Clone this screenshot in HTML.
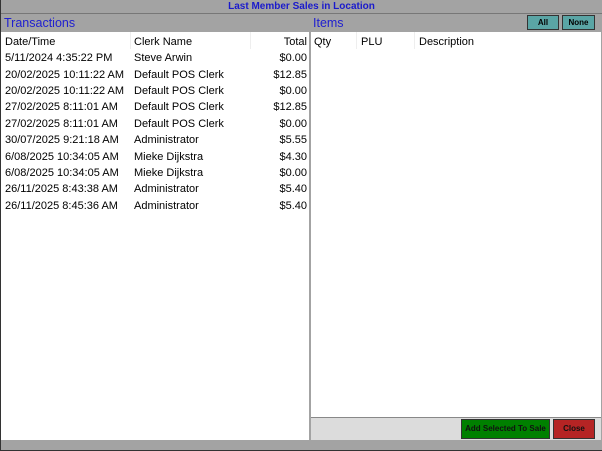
<!DOCTYPE html>
<html><head><style>
*{margin:0;padding:0;box-sizing:border-box}
html,body{overflow:hidden}
body{width:602px;height:451px;background:#a3a3a3;font-family:"Liberation Sans",sans-serif;position:relative;border-left:1px solid #333;border-bottom:1px solid #333}
.a{position:absolute}
.title{left:0;top:0;width:601px;height:14px;text-align:center;color:#1a1acc;font-weight:bold;font-size:10px;line-height:13px;border-bottom:1px solid #777}
.hdr{color:#2020d0;font-size:12.5px}
.lp{left:0;top:32px;width:308px;height:408px;background:#fff}
.rp{left:310px;top:32px;width:290px;height:385px;background:#fff}
.bar{left:310px;top:417px;width:290px;height:23px;background:#dcdcdc;border-top:1px solid #888}
.row{position:absolute;left:0;height:16px;font-size:11px;line-height:16px;color:#000;width:308px;white-space:nowrap}
.row span{position:absolute}
.btn{position:absolute;font-size:8px;font-weight:bold;text-align:center;border:1px solid #333;white-space:nowrap}
</style></head><body>
<div class="a title">Last Member Sales in Location</div>
<div class="a hdr" style="left:3px;top:16px">Transactions</div>
<div class="a hdr" style="left:312px;top:16px">Items</div>
<div class="btn" style="left:526px;top:15px;width:32px;height:15px;line-height:13px;background:#5aa5a5">All</div>
<div class="btn" style="left:561px;top:15px;width:33px;height:15px;line-height:13px;background:#5aa5a5">None</div>
<div class="a lp">
<div class="a" style="left:129px;top:0;width:1px;height:17px;background:#eee"></div>
<div class="a" style="left:249px;top:0;width:1px;height:17px;background:#eee"></div>
<div class="row" style="top:2px"><span style="left:4px">Date/Time</span><span style="left:133px">Clerk Name</span><span style="right:2px">Total</span></div>
<div class="row" style="top:18px"><span style="left:4px">5/11/2024 4:35:22 PM</span><span style="left:133px">Steve Arwin</span><span style="right:2px">$0.00</span></div>
<div class="row" style="top:35px"><span style="left:4px">20/02/2025 10:11:22 AM</span><span style="left:133px">Default POS Clerk</span><span style="right:2px">$12.85</span></div>
<div class="row" style="top:51px"><span style="left:4px">20/02/2025 10:11:22 AM</span><span style="left:133px">Default POS Clerk</span><span style="right:2px">$0.00</span></div>
<div class="row" style="top:67px"><span style="left:4px">27/02/2025 8:11:01 AM</span><span style="left:133px">Default POS Clerk</span><span style="right:2px">$12.85</span></div>
<div class="row" style="top:84px"><span style="left:4px">27/02/2025 8:11:01 AM</span><span style="left:133px">Default POS Clerk</span><span style="right:2px">$0.00</span></div>
<div class="row" style="top:100px"><span style="left:4px">30/07/2025 9:21:18 AM</span><span style="left:133px">Administrator</span><span style="right:2px">$5.55</span></div>
<div class="row" style="top:117px"><span style="left:4px">6/08/2025 10:34:05 AM</span><span style="left:133px">Mieke Dijkstra</span><span style="right:2px">$4.30</span></div>
<div class="row" style="top:133px"><span style="left:4px">6/08/2025 10:34:05 AM</span><span style="left:133px">Mieke Dijkstra</span><span style="right:2px">$0.00</span></div>
<div class="row" style="top:149px"><span style="left:4px">26/11/2025 8:43:38 AM</span><span style="left:133px">Administrator</span><span style="right:2px">$5.40</span></div>
<div class="row" style="top:166px"><span style="left:4px">26/11/2025 8:45:36 AM</span><span style="left:133px">Administrator</span><span style="right:2px">$5.40</span></div>
</div>
<div class="a rp">
<div class="a" style="left:45px;top:0;width:1px;height:17px;background:#eee"></div>
<div class="a" style="left:103px;top:0;width:1px;height:17px;background:#eee"></div>
<div class="row" style="top:2px"><span style="left:3px">Qty</span><span style="left:50px">PLU</span><span style="left:108px">Description</span></div>
</div>
<div class="a bar"></div>
<div class="btn" style="left:460px;top:419px;width:89px;height:20px;line-height:18px;background:#008000;color:#111">Add Selected To Sale</div>
<div class="btn" style="left:552px;top:419px;width:42px;height:20px;line-height:18px;background:#b52424;color:#111">Close</div>
</body></html>
